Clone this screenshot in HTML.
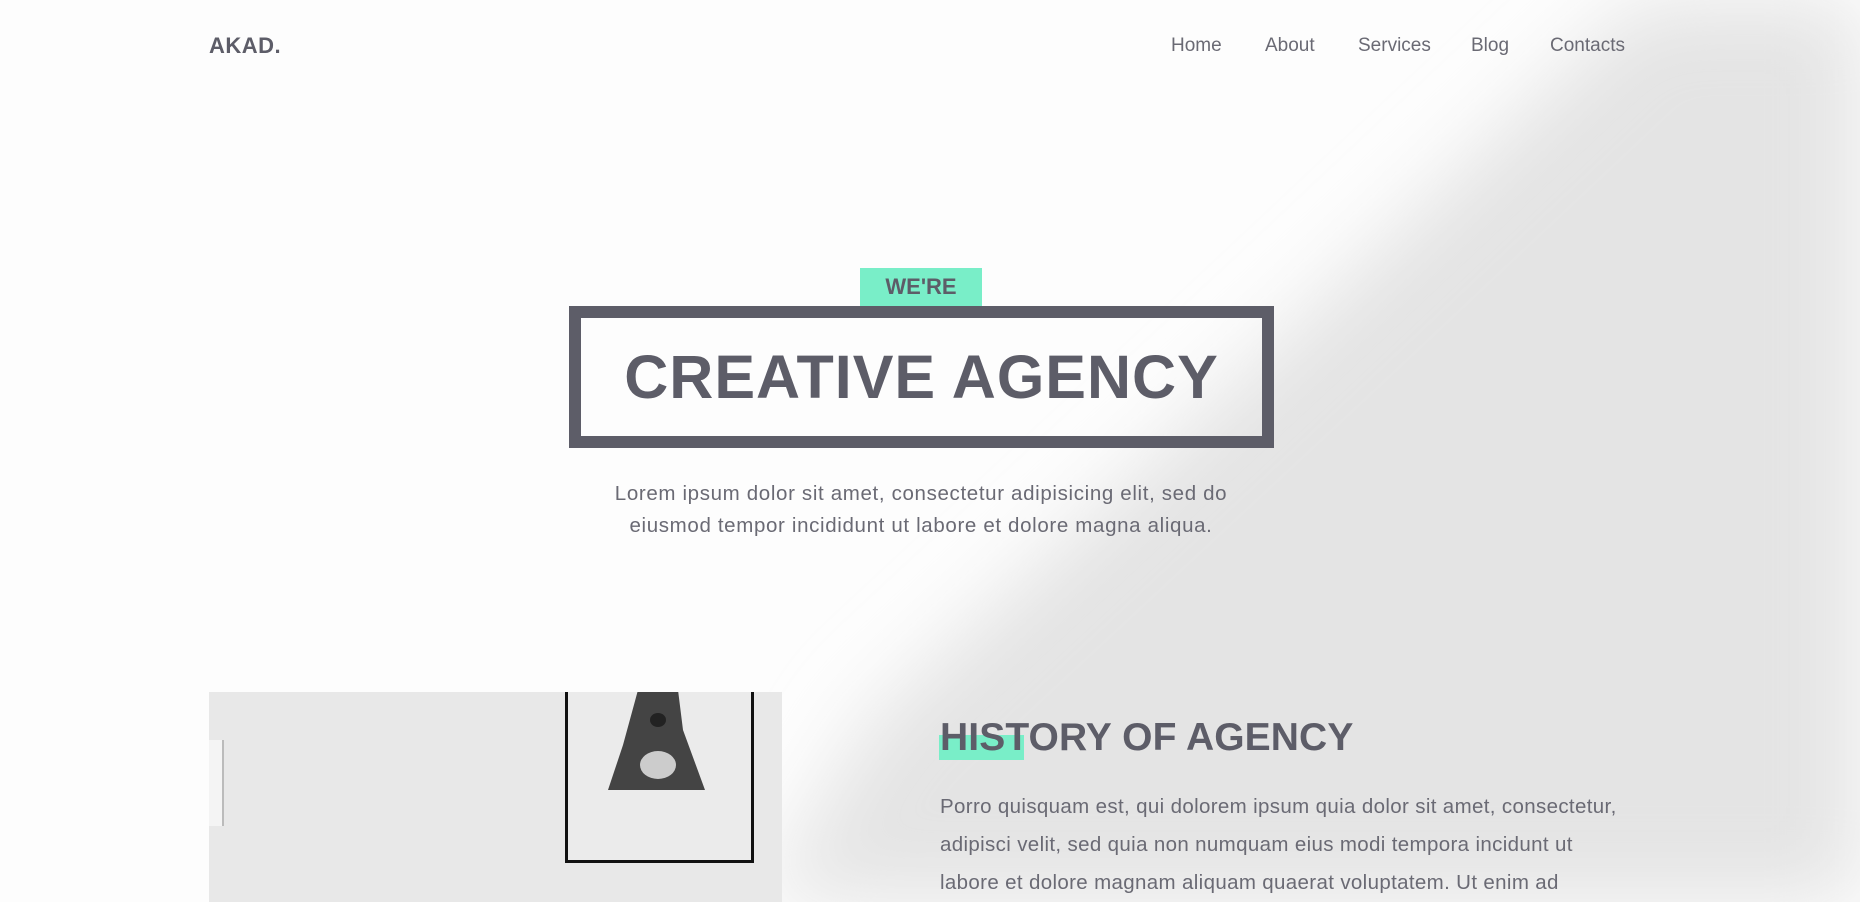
<!DOCTYPE html>
<html><head><meta charset="utf-8"><style>
*{margin:0;padding:0;box-sizing:border-box}
body{width:1860px;height:902px;overflow:hidden;background:#fdfdfd;font-family:"Liberation Sans",sans-serif;position:relative;color:#5d5d68}
.bg{position:absolute;left:0;top:0}
.logo{position:absolute;left:209px;top:33px;font-size:22px;font-weight:bold;color:#5d5d68;letter-spacing:0.5px}
.nav{position:absolute;top:35px;font-size:19px;color:#6a6a74}
.badge{position:absolute;left:860px;top:268px;width:122px;height:38px;background:#79eec8;color:#5d5d68;font-weight:bold;font-size:22px;text-align:center;line-height:38px}
.box{position:absolute;left:569px;top:306px;width:705px;height:142px;border:12px solid #5d5d68;text-align:center;font-weight:bold;font-size:61px;line-height:118px;color:#5d5d68;letter-spacing:1px}
.lead{position:absolute;left:540px;width:762px;top:478px;text-align:center;font-size:20.5px;line-height:32px;color:#6a6a74;letter-spacing:0.65px}
.img{position:absolute;left:209px;top:692px;width:573px;height:210px;background:#e8e8e8;overflow:hidden}
.frame{position:absolute;left:356px;top:-5px;width:189px;height:176px;border:3px solid #111;background:#ebebeb}
.hbar{position:absolute;left:939px;top:735px;width:85px;height:25px;background:#79eec8}
.h2{position:absolute;left:940px;top:716px;font-size:39px;font-weight:bold;color:#5d5d68;letter-spacing:0.1px}
.p2{position:absolute;left:940px;top:788px;width:800px;font-size:20.5px;line-height:38px;color:#6a6a74;white-space:nowrap;letter-spacing:0.35px}
</style></head><body>
<svg class="bg" width="1860" height="902">
<defs><filter id="b"><feGaussianBlur stdDeviation="40"/></filter></defs>
<polygon points="1640,0 1860,0 1860,902 760,902 870,720 1300,320" fill="#e4e4e4" filter="url(#b)"/>
</svg>
<div class="logo">AKAD.</div>
<div class="nav" style="left:1171px">Home</div>
<div class="nav" style="left:1265px">About</div>
<div class="nav" style="left:1358px">Services</div>
<div class="nav" style="left:1471px">Blog</div>
<div class="nav" style="left:1550px">Contacts</div>
<div class="badge">WE'RE</div>
<div class="box">CREATIVE AGENCY</div>
<div class="lead">Lorem ipsum dolor sit amet, consectetur adipisicing elit, sed do<br>eiusmod tempor incididunt ut labore et dolore magna aliqua.</div>
<div class="img">
<div style="position:absolute;left:0;top:48px;width:15px;height:86px;background:#f4f4f4;border-right:2px solid #bbb"></div>
<div class="frame">
<svg width="183" height="170"><polygon points="70,0 110,0 115,40 137,100 40,100 55,55" fill="#444"/><ellipse cx="90" cy="75" rx="18" ry="14" fill="#ccc"/><ellipse cx="90" cy="30" rx="8" ry="7" fill="#222"/></svg>
</div>
</div>
<div class="hbar"></div>
<div class="h2">HISTORY OF AGENCY</div>
<div class="p2">Porro quisquam est, qui dolorem ipsum quia dolor sit amet, consectetur,<br>adipisci velit, sed quia non numquam eius modi tempora incidunt ut<br>labore et dolore magnam aliquam quaerat voluptatem. Ut enim ad</div>
</body></html>
